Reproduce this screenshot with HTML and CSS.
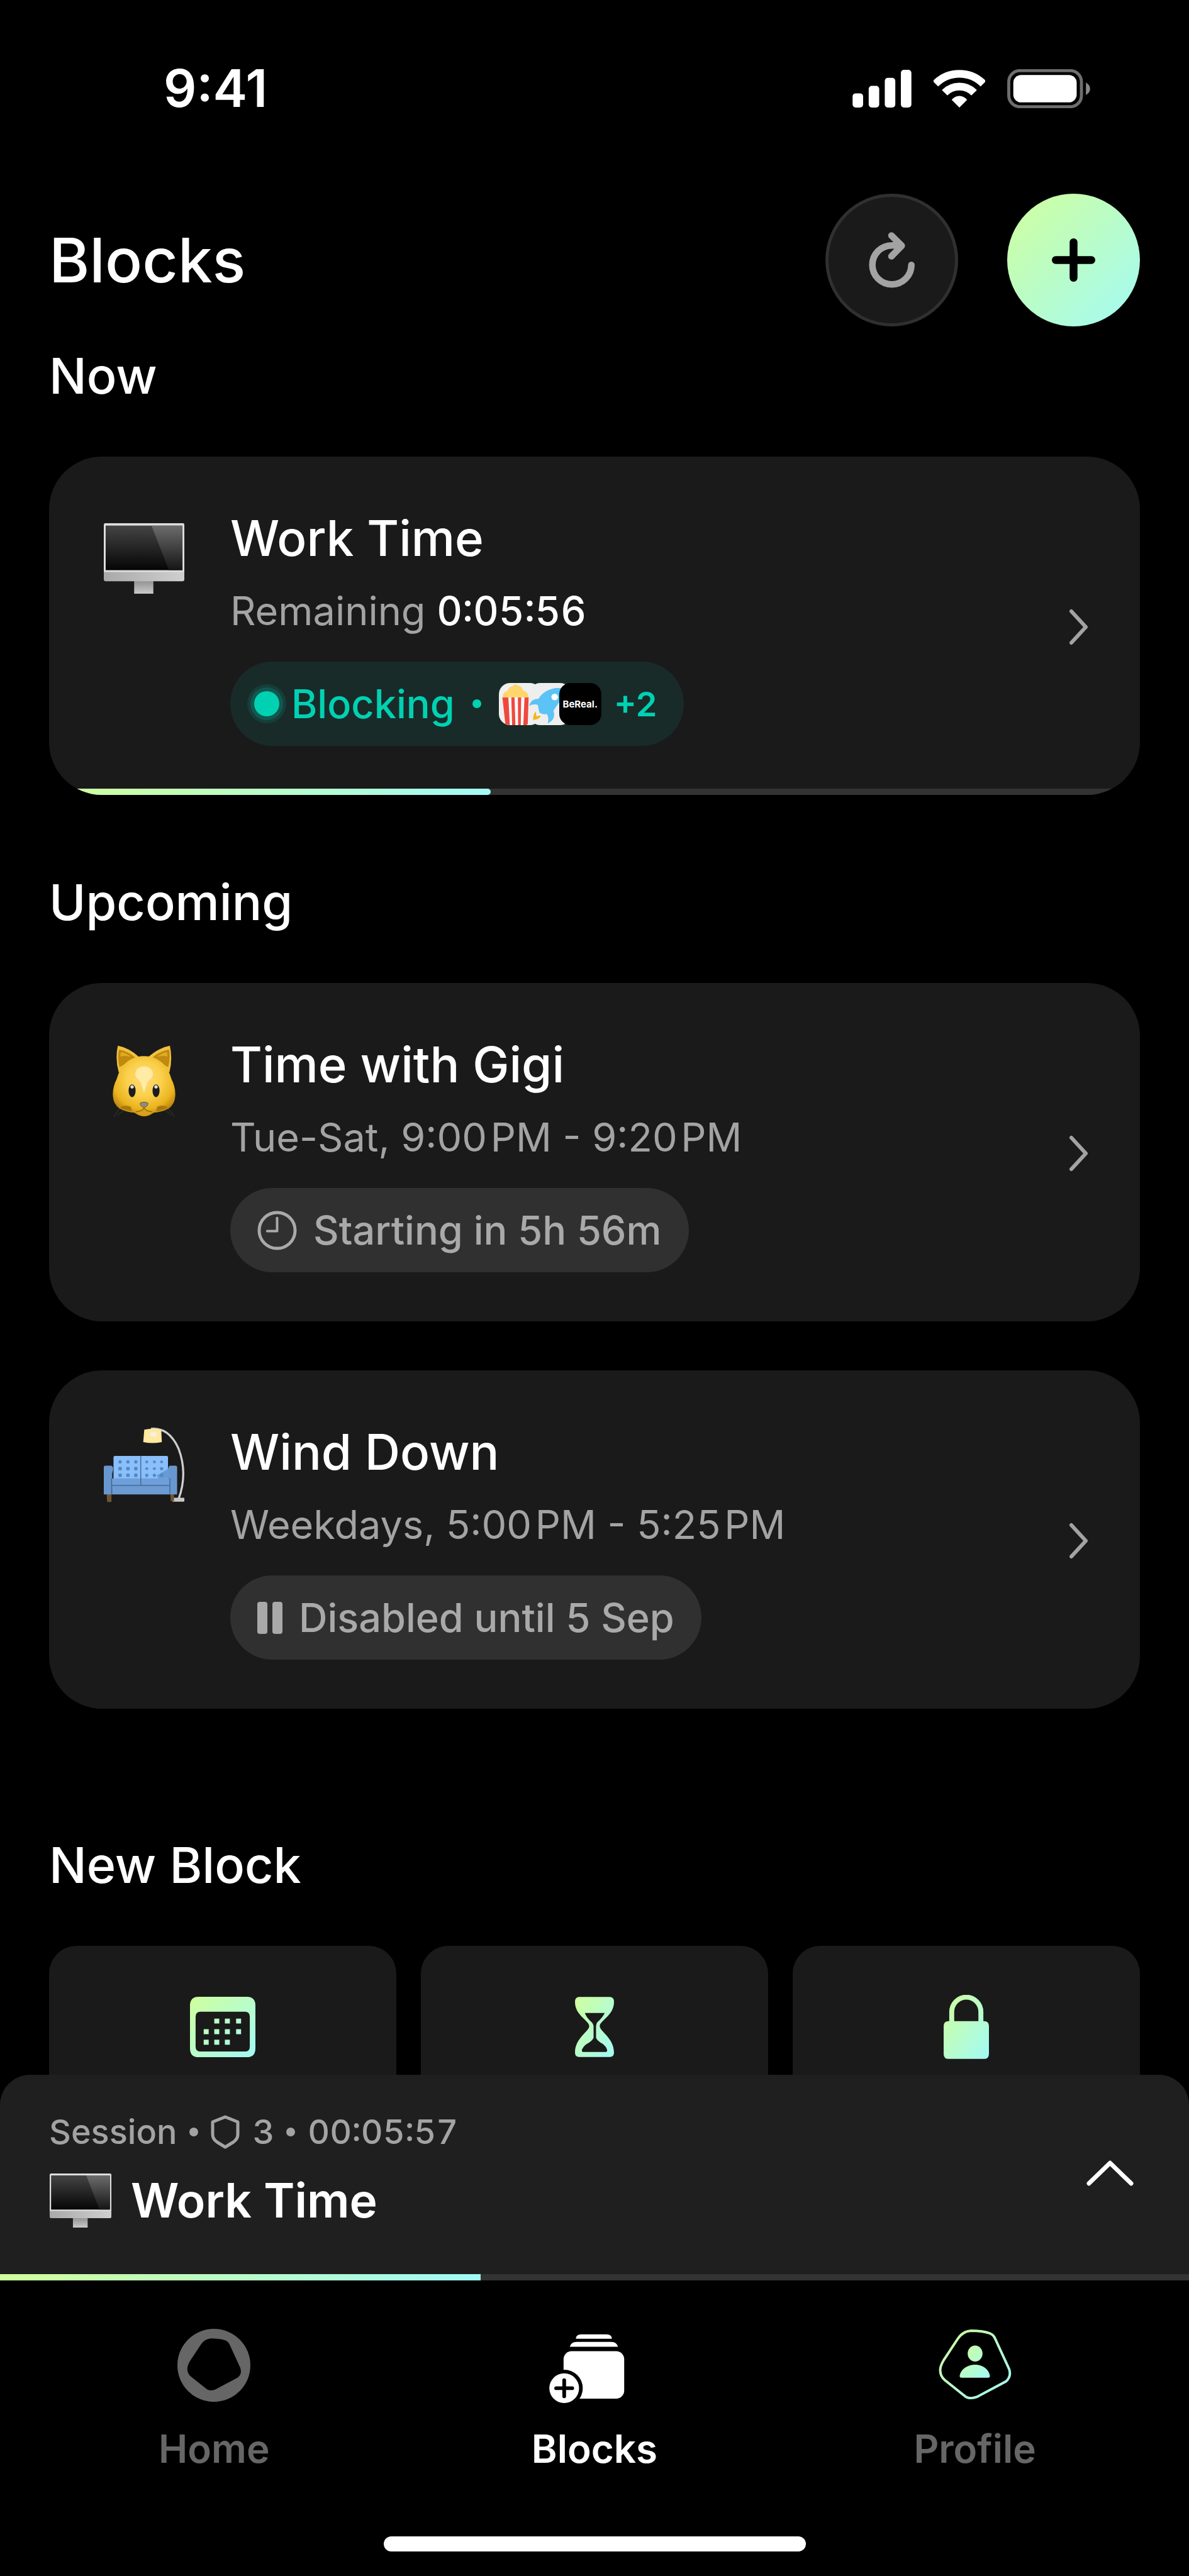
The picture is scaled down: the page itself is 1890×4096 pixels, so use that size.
FILE: index.html
```html
<!DOCTYPE html>
<html lang="en">
  <head>
    <meta charset="UTF-8" />
    <meta name="viewport" content="width=device-width, initial-scale=1.0" />
    <title>Blocks</title>
    <link rel="stylesheet" href="styles.css">
  </head>
  <body>
    <!-- Shared gradient and icons -->
    <svg class="defs" width="0" height="0" aria-hidden="true">
      <defs>
        <linearGradient id="accent" x1="0" y1="0" x2="1" y2="1">
          <stop offset="0" stop-color="#d0ff9c" />
          <stop offset="1" stop-color="#a2faf6" />
        </linearGradient>
        <linearGradient id="screen" x1="0" y1="0" x2="0" y2="1">
          <stop offset="0" stop-color="#444" />
          <stop offset="1" stop-color="#050505" />
        </linearGradient>
        <linearGradient id="glare" x1="0" y1="0" x2="0" y2="1">
          <stop offset="0" stop-color="#6c6c6c" />
          <stop offset="1" stop-color="#151515" />
        </linearGradient>
        <linearGradient id="chin" x1="0" y1="0" x2="1" y2="0">
          <stop offset="0" stop-color="#a9a9a9" />
          <stop offset="1" stop-color="#cfcfcf" />
        </linearGradient>
        <linearGradient id="stand" x1="0" y1="0" x2="0" y2="1">
          <stop offset="0" stop-color="#8f8f8f" />
          <stop offset="1" stop-color="#cacaca" />
        </linearGradient>
        <radialGradient id="fur" cx="0.5" cy="0.38" r="0.62">
          <stop offset="0" stop-color="#ffdc78" />
          <stop offset="0.45" stop-color="#fad04c" />
          <stop offset="0.8" stop-color="#ebb41e" />
          <stop offset="1" stop-color="#bd8610" />
        </radialGradient>
      </defs>
      <symbol id="monitor" viewBox="0 0 130 114">
        <rect x="49" y="92" width="31" height="22" fill="url(#stand)" />
        <path d="M0 74H130V91Q130 94 127 94H3Q0 94 0 91Z" fill="url(#chin)" />
        <path d="M3 0H127Q130 0 130 3V79H0V3Q0 0 3 0Z" fill="#dedede" />
        <rect x="3" y="4" width="124" height="72" fill="url(#screen)" />
        <path d="M77 4H127V76H105Z" fill="url(#glare)" />
      </symbol>
      <symbol id="chevron" viewBox="0 0 31 58">
        <path d="M4 4L27 29L4 54" fill="none" stroke="#a3a3a3" stroke-width="6" stroke-linecap="round" stroke-linejoin="round" />
      </symbol>
    </svg>

    <div class="status-bar">
      <span class="clock">9:41</span>
      <div class="status-icons">
        <svg width="94" height="60" viewBox="0 0 95 61" fill="#fff">
          <rect x="0" y="38" width="17" height="23" rx="5" />
          <rect x="26" y="26" width="17" height="35" rx="5" />
          <rect x="52" y="13" width="17" height="48" rx="5" />
          <rect x="78" y="0" width="17" height="61" rx="5" />
        </svg>
        <svg width="82" height="60" viewBox="0 0 248 181" fill="none" stroke="#fff" stroke-width="37">
          <path d="M9 67A162 162 0 0 1 239 67" />
          <path d="M53 110A100 100 0 0 1 195 110" />
          <path d="M124 181L87 144A46 46 0 0 1 161 144Z" fill="#fff" stroke="none" />
        </svg>
        <svg width="132" height="62" viewBox="0 0 401 189">
          <rect x="7" y="7" width="352" height="175" rx="54" fill="none" stroke="#6e6e6e" stroke-width="15" />
          <rect x="29" y="28" width="307" height="133" rx="38" fill="#fff" />
          <path d="M381 65Q401 77 401 95T381 125Z" fill="#8a8a8a" />
        </svg>
      </div>
    </div>

    <main>
      <header class="page-header">
        <h1>Blocks</h1>
        <div class="actions">
          <button class="round-btn" aria-label="Refresh">
            <svg width="98" height="98" viewBox="153 840 300 300" fill="none" stroke="#a3a3a3" stroke-width="32" stroke-linecap="round" stroke-linejoin="round">
              <path d="M397 1012A95 95 0 1 1 302 917H348" />
              <path d="M300 869L350 919L300 970" />
            </svg>
          </button>
          <button class="round-btn add" aria-label="New block">
            <svg width="69" height="69" viewBox="0 0 210 210" stroke="#000" stroke-width="38" stroke-linecap="round">
              <path d="M105 19V191M19 105H191" />
            </svg>
          </button>
        </div>
      </header>

      <section>
        <h2>Now</h2>
        <a class="card" href="#">
          <svg class="emoji" viewBox="0 0 131 131"><use href="#monitor" x="0" y="16" width="130" height="114" /></svg>
          <div class="info">
            <h3>Work Time</h3>
            <p>Remaining <time>0:05:56</time></p>
            <div class="pill blocking">
              <svg class="live" width="64" height="64" viewBox="0 0 64 64" fill="#00d1b2">
                <circle cx="32" cy="32" r="31" fill-opacity="0.12" />
                <circle cx="32" cy="32" r="26" fill-opacity="0.18" />
                <circle cx="32" cy="32" r="20" />
              </svg>
              Blocking
              <span class="bullet"></span>
              <span class="apps">
                <svg class="app" viewBox="0 0 204 204">
                  <rect width="204" height="204" fill="#f0f0f0" />
                  <path d="M17 70Q20 42 42 38Q48 16 66 16Q76 0 92 12Q112 14 116 34Q142 42 144 70Z" fill="#ffd66e" />
                  <path d="M17 70H144L140 196Q140 204 132 204H36Z" fill="#fff" />
                  <path d="M17 70H46L53 204H32ZM60 70H76L80 204H64ZM92 70H108L106 204H93ZM124 70H144L140 196Q139 204 130 204H118Z" fill="#f0483e" />
                </svg>
                <svg class="app" viewBox="0 0 204 204">
                  <rect width="204" height="204" fill="#eee" />
                  <path d="M128 24Q70 34 46 76Q10 76 0 110Q24 100 42 106L50 144Q66 154 86 150Q98 168 90 196Q132 176 118 134Q144 90 204 24Z" fill="#5bc3f5" />
                  <circle cx="124" cy="68" r="16" fill="#fff" />
                  <path d="M32 138Q18 156 20 178Q42 180 58 160L46 158L36 162Z" fill="#efb71a" />
                  <path d="M0 186L14 200V204H0Z" fill="#ffc94d" />
                </svg>
                <span class="app bereal">BeReal.</span>
              </span>
              <span class="more">+2</span>
            </div>
          </div>
          <svg class="chevron"><use href="#chevron" /></svg>
          <div class="progress"><span style="width: 40.5%"></span></div>
        </a>
      </section>

      <section>
        <h2>Upcoming</h2>
        <div class="card-list">
          <a class="card" href="#">
            <svg class="emoji" viewBox="84 58 393 393">
              <path d="M160 394Q146 406 134 432M176 404Q160 414 150 424M396 394Q416 408 426 434M384 404Q400 412 410 424" fill="none" stroke="#3c3c3c" stroke-width="3" />
              <path d="M156 216Q138 150 152 88Q206 98 254 142L300 142Q350 98 404 88Q418 150 402 216Z" fill="#f0c040" />
              <path d="M160 192Q148 146 158 106Q204 116 238 146Z" fill="#c08a0e" />
              <path d="M396 192Q408 146 400 106Q352 116 318 146Z" fill="#c08a0e" />
              <path d="M164 140Q164 124 168 118Q196 124 216 142Q190 134 164 140ZM392 140Q392 124 388 118Q362 124 342 142Q366 134 392 140Z" fill="#e0aa22" />
              <path d="M279 138Q348 138 390 196Q404 222 412 250Q432 290 430 330Q428 372 398 392Q370 408 326 412Q300 430 279 430Q258 430 232 412Q188 408 160 392Q130 372 128 330Q126 290 146 250Q154 222 168 196Q210 138 279 138Z" fill="url(#fur)" />
              <path d="M279 188Q320 190 322 226Q318 246 296 262Q286 290 279 318Q270 290 262 262Q240 246 236 226Q238 190 279 188Z" fill="#ffeaa6" />
              <path d="M168 382Q196 374 216 384Q216 398 224 404Q190 402 168 390ZM390 382Q362 374 342 384Q342 398 334 404Q368 402 390 390Z" fill="#a8780c" />
              <path d="M238 410Q266 404 279 390Q292 404 320 410Q302 428 279 429Q256 428 238 410Z" fill="#d9a01a" />
              <ellipse cx="221" cy="306" rx="17" ry="31" fill="#1c1c1c" />
              <ellipse cx="337" cy="306" rx="17" ry="31" fill="#1c1c1c" />
              <circle cx="221" cy="287" r="8" fill="#e0e0e0" />
              <circle cx="337" cy="287" r="8" fill="#e0e0e0" />
              <path d="M260 366Q279 356 298 366Q298 382 279 388Q260 382 260 366Z" fill="#8c8c8c" stroke="#6d5110" stroke-width="3" />
              <path d="M240 408Q268 406 279 390Q290 406 318 408" fill="none" stroke="#8a6208" stroke-width="4" />
            </svg>
            <div class="info">
              <h3>Time with Gigi</h3>
              <p>Tue-Sat, 9:00&#8202;PM - 9:20&#8202;PM</p>
              <div class="pill">
                <svg width="63" height="63" viewBox="0 0 64 64" fill="none" stroke="#a9a9a9" stroke-width="5" stroke-linecap="round" stroke-linejoin="round">
                  <circle cx="32" cy="32" r="29" />
                  <path d="M32 12V33H16" stroke-width="4" />
                </svg>
                Starting in 5h 56m
              </div>
            </div>
            <svg class="chevron"><use href="#chevron" /></svg>
          </a>

          <a class="card" href="#">
            <svg class="emoji" viewBox="84 75 393 393">
              <path d="M312 84Q400 76 446 180Q492 300 446 424" fill="none" stroke="#cfcfcf" stroke-width="10" />
              <rect x="416" y="418" width="58" height="19" rx="3" fill="#c8c8c8" />
              <path d="M280 88Q320 78 362 88L365 148Q320 158 275 148Z" fill="#ffe9a0" />
              <ellipse cx="325" cy="111" rx="17" ry="12" fill="#f3f0e4" />
              <path d="M98 400H121V438H100ZM406 400H424V434H408Z" fill="#6e5632" />
              <path d="M138 215H388Q395 215 395 222V330H131V222Q131 215 138 215Z" fill="#89bffa" />
              <path d="M124 324H404V402H124Z" fill="#6c9ad2" />
              <path d="M124 325H404V356H124Z" fill="#6f9fdb" />
              <path d="M392 280L340 310L350 324H404V270Z" fill="#689ad6" />
              <path d="M92 262H116Q130 262 130 280L124 300V402H84V270Q84 262 92 262Z" fill="#6897d0" />
              <path d="M431 262H408Q396 262 396 280L402 300V402H439V270Q439 262 431 262Z" fill="#6897d0" />
              <path d="M263 215V356M122 358H404M130 275V324M122 324V400M404 324V400" fill="none" stroke="#40628c" stroke-width="4" />
              <g fill="#5688c2">
                <circle cx="163" cy="244" r="8" /><circle cx="201" cy="244" r="8" /><circle cx="239" cy="244" r="8" />
                <circle cx="292" cy="244" r="7" /><circle cx="329" cy="244" r="7" /><circle cx="364" cy="244" r="7" />
                <circle cx="163" cy="277" r="9" /><circle cx="201" cy="277" r="9" /><circle cx="239" cy="277" r="9" />
                <circle cx="292" cy="277" r="7" /><circle cx="329" cy="277" r="7" /><circle cx="364" cy="277" r="8" />
                <circle cx="163" cy="309" r="9" /><circle cx="201" cy="309" r="9" /><circle cx="239" cy="309" r="9" />
                <circle cx="292" cy="309" r="8" /><circle cx="329" cy="309" r="8" /><circle cx="364" cy="309" r="9" />
              </g>
            </svg>
            <div class="info">
              <h3>Wind Down</h3>
              <p>Weekdays, 5:00&#8202;PM - 5:25&#8202;PM</p>
              <div class="pill">
                <svg width="40" height="51" viewBox="0 0 40 51" fill="#a9a9a9">
                  <rect width="16" height="51" rx="4" />
                  <rect x="24" width="16" height="51" rx="4" />
                </svg>
                Disabled until 5 Sep
              </div>
            </div>
            <svg class="chevron"><use href="#chevron" /></svg>
          </a>
        </div>
      </section>

      <section class="new-block">
        <h2>New Block</h2>
        <div class="tiles">
          <button class="tile" aria-label="Schedule">
            <svg width="104" height="102" viewBox="0 -3 105 103" fill="url(#accent)" fill-rule="evenodd">
              <path d="M14 0H91Q105 0 105 14V83Q105 97 91 97H14Q0 97 0 83V14Q0 0 14 0ZM17 24Q9 24 9 32V80Q9 88 17 88H88Q96 88 96 80V32Q96 24 88 24Z
                M39 35h8v8h-8zM56 35h8v8h-8zM74 35h8v8h-8zM22 52h8v8h-8zM39 52h8v8h-8zM56 52h8v8h-8zM74 52h8v8h-8zM22 69h8v8h-8zM39 69h8v8h-8zM56 69h8v8h-8z" />
            </svg>
          </button>
          <button class="tile" aria-label="Timer">
            <svg width="62" height="102" viewBox="0 -3 63 103" fill="url(#accent)" fill-rule="evenodd">
              <path d="M7 0H56Q63 0 63 8C63 30 40 38 40 47S63 66 63 90Q63 97 56 97H7Q0 97 0 90C0 66 23 56 23 47S0 30 0 8Q0 0 7 0Z
                M16 26H48Q45 33 36 41Q34 44 34 47V66Q36 71 45 76Q51 81 52 86Q52 89 49 89H14Q11 89 11 86Q13 80 19 76Q28 71 30 66V47Q30 44 27 41Q18 33 16 26Z" />
            </svg>
          </button>
          <button class="tile" aria-label="Lock">
            <svg width="72" height="102" viewBox="0 0 73 103" fill="url(#accent)" fill-rule="evenodd">
              <path d="M9 42V27A27 27 0 0 1 64 27V42H65Q73 42 73 50V95Q73 103 65 103H8Q0 103 0 95V50Q0 42 8 42ZM17 42H56V27A19 19 0 0 0 17 27Z" />
            </svg>
          </button>
        </div>
      </section>
    </main>

    <footer>
      <div class="session">
        <div class="session-info">
          <p>
            Session <span class="bullet"></span>
            <svg width="46" height="54" viewBox="0 0 46 54" fill="none" stroke="#a3a3a3" stroke-width="5" stroke-linejoin="round">
              <path d="M23 3L43 11V31Q43 38 36 43L23 51L10 43Q3 38 3 31V11Z" />
            </svg>
            3 <span class="bullet"></span> <time>00:05:57</time>
          </p>
          <h3><svg width="100" height="86"><use href="#monitor" /></svg> Work Time</h3>
        </div>
        <button class="expand" aria-label="Expand session">
          <svg width="75" height="42" viewBox="0 0 76 42" fill="none" stroke="#fff" stroke-width="7" stroke-linecap="round" stroke-linejoin="round">
            <path d="M4 38L38 5L72 38" />
          </svg>
        </button>
      </div>
      <div class="progress session-progress"><span style="width: 40.4%"></span></div>

      <nav class="tab-bar">
        <a href="#">
          <svg width="116" height="116" viewBox="0 0 118 118">
            <circle cx="59" cy="59" r="59" fill="#666" />
            <path d="M52 2C64 2 74 3 82 6Q88 8 91 14L114 64Q118 76 109 84L62 109Q52 113 44 109L10 82Q1 74 3 62Q4 57 8 50L31 15Q39 3 52 2Z" transform="translate(14 14) scale(0.77)" />
          </svg>
          Home
        </a>
        <a class="active" href="#">
          <svg width="146" height="118" viewBox="0 0 148 120" fill="#fff">
            <path d="M44 16Q44 9 53 9H93Q102 9 102 16ZM34 29Q36 21 45 21H101Q110 21 112 29Z" />
            <rect x="24" y="36" width="98" height="77" rx="13" />
            <circle cx="25" cy="96" r="30" fill="#000" />
            <circle cx="25" cy="96" r="24" />
            <path d="M25 83V109M12 96H38" stroke="#000" stroke-width="6" stroke-linecap="round" />
          </svg>
          Blocks
        </a>
        <a href="#">
          <svg width="116" height="116" viewBox="0 -1 118 118">
            <path d="M52 2C64 2 74 3 82 6Q88 8 91 14L114 64Q118 76 109 84L62 109Q52 113 44 109L10 82Q1 74 3 62Q4 57 8 50L31 15Q39 3 52 2Z" fill="none" stroke="url(#accent)" stroke-width="4" />
            <path d="M59 26A12 13 0 0 1 59 52A12 13 0 0 1 59 26ZM34 75C36 64 47 57 59 57S81 64 83 75Q83 78 80 78H37Q34 78 34 75Z" fill="url(#accent)" />
          </svg>
          Profile
        </a>
      </nav>
      <div class="home-indicator"></div>
    </footer>
  </body>
</html>
```
FILE: styles.css
```css
* {
  box-sizing: border-box;
}

body {
  font-family: Inter, "Liberation Sans", sans-serif;
  display: flex;
  flex-direction: column;
  height: 100vh;
  margin: 0;
  background: #000;
  color: #fff;
}

h1,
h2,
h3,
p {
  margin: 0;
  font-weight: 500;
}

a {
  color: inherit;
  text-decoration: none;
}

button {
  padding: 0;
  border: none;
  font: inherit;
  cursor: pointer;
}

svg {
  flex: none;
}

time {
  font-variant-numeric: tabular-nums;
}

.defs {
  position: absolute;
}

/* Status bar */
.status-bar {
  display: flex;
  justify-content: space-between;
  align-items: center;
  flex: none;
  padding: 99px 157px 0 260px;
}

.clock {
  font-size: 82px;
  line-height: 84px;
  font-weight: 600;
}

.status-icons {
  display: flex;
  align-items: center;
  gap: 35px;
}

/* Scrolling content */
main {
  flex: 1;
  min-height: 0;
  overflow-y: auto;
  scrollbar-width: none;
  padding: 125px 78px 0;
}

.page-header {
  display: flex;
  justify-content: space-between;
  align-items: center;
  margin-bottom: 30px;
}

h1 {
  font-size: 98px;
  line-height: 120px;
}

.actions {
  display: flex;
  gap: 78px;
}

.round-btn {
  display: flex;
  justify-content: center;
  align-items: center;
  width: 211px;
  height: 211px;
  border: 5px solid #303030;
  border-radius: 50%;
  background: #1a1a1a;
}

.round-btn.add {
  border: none;
  background: linear-gradient(135deg, #d0ff9c, #a2faf6);
}

section + section {
  margin-top: 122px;
}

section.new-block {
  margin-top: 200px;
}

h2 {
  font-size: 79px;
  line-height: 96px;
  margin-bottom: 81px;
}

/* Cards */
.card-list {
  display: flex;
  flex-direction: column;
  gap: 78px;
}

.card {
  display: flex;
  align-items: flex-start;
  position: relative;
  overflow: hidden;
  padding: 82px 82px 78px 87px;
  border-radius: 84px;
  background: #1a1a1a;
}

.emoji {
  width: 129px;
  height: 129px;
  margin-top: 8px;
}

.info {
  flex: 1;
  margin-left: 72px;
}

.info h3 {
  font-size: 78px;
  line-height: 96px;
}

.info p {
  margin-top: 29px;
  color: #a3a3a3;
  font-size: 63px;
  line-height: 76px;
  font-weight: 400;
}

.info time {
  color: #fff;
  font-weight: 500;
}

.chevron {
  align-self: center;
  width: 31px;
  height: 58px;
}

.pill {
  display: inline-flex;
  align-items: center;
  gap: 26px;
  height: 134px;
  margin-top: 43px;
  padding: 0 43px;
  border-radius: 67px;
  background: #303030;
  color: #a9a9a9;
  font-size: 63px;
  font-weight: 500;
  vertical-align: top;
}

.pill.blocking {
  gap: 20px;
  padding-left: 26px;
  background: #182b29;
  color: #00d1b2;
}

.live {
  margin-right: -13px;
}

.bullet {
  display: inline-block;
  width: 14px;
  height: 14px;
  border-radius: 50%;
  background: currentColor;
}

.pill .bullet {
  margin: 0 8px;
}

.apps {
  display: flex;
}

.app {
  width: 67px;
  height: 67px;
  border-radius: 18px;
}

.app + .app {
  margin-left: -19px;
}

.bereal {
  background: #000;
  color: #fff;
  font-size: 15px;
  line-height: 67px;
  font-weight: 700;
  text-align: center;
}

.more {
  font-size: 54px;
  font-weight: 600;
}

.progress {
  height: 10px;
  background: #333;
}

.progress span {
  display: block;
  height: 10px;
  border-radius: 0 5px 5px 0;
  background: linear-gradient(90deg, #d0ff9c, #a2faf6);
}

/* Runs along the bottom edge of the card */
.card .progress {
  position: absolute;
  left: 0;
  right: 0;
  bottom: 0;
}

/* New block tiles */
.tiles {
  display: grid;
  grid-template-columns: repeat(3, 1fr);
  gap: 39px;
}

.tile {
  display: flex;
  justify-content: center;
  height: 400px;
  padding-top: 78px;
  border-radius: 44px;
  background: #1a1a1a;
}

/* Session panel */
footer {
  flex: none;
}

.session {
  display: flex;
  justify-content: space-between;
  align-items: center;
  padding: 0 88px 5px 78px;
  border-radius: 48px 48px 0 0;
  background: #1f1f1f;
}

.session-info {
  padding: 59px 0 66px;
}

.session p {
  display: flex;
  align-items: center;
  gap: 20px;
  color: #a3a3a3;
  font-size: 54px;
  line-height: 64px;
  font-weight: 500;
}

.session h3 {
  display: flex;
  align-items: center;
  gap: 30px;
  margin-top: 31px;
  font-size: 75px;
  line-height: 92px;
  font-weight: 600;
}

.expand {
  display: flex;
  background: none;
}

.session-progress span {
  border-radius: 0;
}

/* Tab bar */
.tab-bar {
  display: grid;
  grid-template-columns: repeat(3, 1fr);
  padding: 77px 38px 0;
}

.tab-bar a {
  display: flex;
  flex-direction: column;
  align-items: center;
  justify-content: space-between;
  height: 229px;
  color: #666;
  font-size: 62px;
  line-height: 76px;
  font-weight: 600;
}

.tab-bar .active {
  color: #fff;
}

.home-indicator {
  width: 671px;
  height: 24px;
  margin: 101px auto 39px;
  border-radius: 12px;
  background: #fff;
}
```
